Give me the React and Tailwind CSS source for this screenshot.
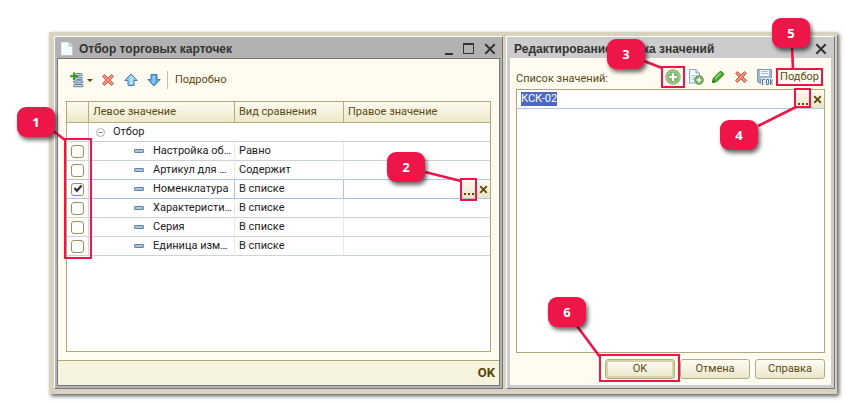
import React, { useState } from "react";

const ROWS = [
  { id: "setting", name: "Настройка об…", compare: "Равно" },
  { id: "article", name: "Артикул для …", compare: "Содержит" },
  { id: "nomenclature", name: "Номенклатура", compare: "В списке" },
  { id: "feature", name: "Характеристи…", compare: "В списке" },
  { id: "series", name: "Серия", compare: "В списке" },
  { id: "unit", name: "Единица изм…", compare: "В списке" },
];

// Numbered badge with a leader line and a frame around its parent.
// line is [x1, y1, x2, y2], counted from the top left corner of the frame
const Callout = ({ number, frame, badge, line }) => (
  <span className={`pointer-events-none absolute z-20 border-2 border-[#ee1549] ${frame}`}>
    <svg className="absolute -top-0.5 -left-0.5 overflow-visible" width="1" height="1" aria-hidden="true">
      <line x1={line[0]} y1={line[1]} x2={line[2]} y2={line[3]} stroke="#ee1549" strokeWidth="2.6" />
    </svg>
    <span
      className={`absolute flex h-[30px] w-[38px] items-center justify-center rounded-[9px] bg-[#ee1549] font-['Open_Sans',sans-serif] text-[13px] font-bold text-white shadow-[2px_3px_4px_rgba(0,0,0,0.6)] ${badge}`}
    >
      {number}
    </span>
  </span>
);

const CrossIcon = () => (
  <svg width="14" height="14" viewBox="0 0 14 14" aria-hidden="true">
    <path d="M1.500 3.500 3.500 1.500 7 5 10.500 1.500 12.500 3.500 9 7 12.500 10.500 10.500 12.500 7 9 3.500 12.500 1.500 10.500 5 7Z" fill="#f58a78" stroke="#d0604f" strokeWidth="1" strokeLinejoin="round" />
  </svg>
);

const PageIcon = () => (
  <svg width="12" height="14" viewBox="0 0 12 14" aria-hidden="true">
    <path d="M.5.5h7.5l3.5 3.5v9.500H.5z" fill="#f6fbff" stroke="#dfeaf3" />
    <path d="M8 .5V4h3.500" fill="#c6dced" stroke="#8fb1cb" strokeWidth=".8" />
    <path d="M.5 13.500h11V4" fill="none" stroke="#a3bfd4" strokeWidth=".8" />
  </svg>
);

const AddRowIcon = () => (
  <svg width="14" height="16" viewBox="0 0 14 16" aria-hidden="true">
    <g fill="#c3d6e4" stroke="#56768f" strokeWidth=".9">
      <rect x="5.500" y="1.500" width="7" height="2.200" rx="1" />
      <rect x="5.500" y="5.200" width="7" height="2.200" rx="1" />
      <rect x="3.500" y="8.800" width="9.500" height="2.200" rx="1" />
      <rect x="3.500" y="12.500" width="9.500" height="2.200" rx="1" />
    </g>
    <path d="M4 .5v7.500M0 4.200h8" stroke="#3a9a20" strokeWidth="2" />
  </svg>
);

const ArrowIcon = ({ down }) => (
  <svg width="14" height="14" viewBox="0 0 14 14" aria-hidden="true">
    <g transform={down ? "rotate(180 7 7)" : undefined}>
      <path d="M7 1 13.200 7.500H10v5H4v-5H.8Z" fill={down ? "#5fa9e0" : "#8fcbf2"} stroke="#477da8" strokeLinejoin="round" />
      <path d="M7 2.800 10 6H8.500v5.200H6V6Z" fill={down ? "#8fc8ef" : "#bfe3fa"} />
    </g>
  </svg>
);

const PlusCircleIcon = () => (
  <svg width="16" height="16" viewBox="0 0 16 16" aria-hidden="true">
    <circle cx="8" cy="8" r="7.200" fill="#7fba67" stroke="#7f9f78" />
    <circle cx="8" cy="8" r="6.200" fill="none" stroke="#b5dba5" />
    <path d="M8 4v8M4 8h8" stroke="#fff" strokeWidth="2.200" />
  </svg>
);

const AddPageIcon = () => (
  <svg width="16" height="16" viewBox="0 0 16 16" aria-hidden="true">
    <path d="M1.500.5H8L11.500 4v10h-10z" fill="#f4f9fc" stroke="#8ca9bd" />
    <path d="M8 .5V4h3.500" fill="#d2e2ed" stroke="#8ca9bd" />
    <path d="M3.500 6.500h6M3.500 8.500h4M3.500 10.500h3" stroke="#b5c9d6" />
    <circle cx="11" cy="11" r="4.300" fill="#74b060" stroke="#6a9660" />
    <path d="M11 8.500v5M8.500 11h5" stroke="#fff" strokeWidth="1.600" />
  </svg>
);

const PencilIcon = () => (
  <svg width="14" height="14" viewBox="0 0 14 14" aria-hidden="true">
    <path d="M1.500 12.500 2.300 8.200 8.800 1.800Q9.800 1 10.800 1.900L12.300 3.400Q13 4.200 12.300 5L5.800 11.600Z" fill="#45b026" stroke="#2e7f1b" strokeLinejoin="round" />
    <path d="M4.200 8.700 9.800 3.100" stroke="#a4e28a" strokeWidth="1.200" />
    <path d="m1.500 12.500.6-2.300 1.700 1.700Z" fill="#1f4f12" />
  </svg>
);

const SaveIcon = () => (
  <svg width="16" height="16" viewBox="0 0 16 16" aria-hidden="true">
    <path d="M.5.5h14v13.500H2L.5 12.500z" fill="#9db8cc" stroke="#7a99b0" />
    <rect x="3" y="1" width="9" height="6" fill="#f4f8fb" />
    <path d="M4 2.500h7M4 4.500h7" stroke="#a8bfcf" />
    <path d="M3 9h13v7H3z" fill="#e6edf2" />
    <path d="M3.500 9.500v5" stroke="#7a99b0" />
    <path d="M5.500 16v-5.500H8M9.500 10.500h2v5h-2zM13.500 10v6M16 10.500l-2 2.500 2 2.500" fill="none" stroke="#5a7990" />
  </svg>
);

const SmallCross = () => (
  <svg width="9" height="9" viewBox="0 0 9 9" aria-hidden="true">
    <path d="m1.200 1.200 6.600 6.600M7.800 1.200 1.200 7.800" stroke="#5e4a08" strokeWidth="1.900" />
  </svg>
);

const CloseIcon = () => (
  <svg width="12" height="12" viewBox="0 0 12 12" aria-hidden="true">
    <path d="m1.300 1.300 9.400 9.400M10.700 1.300l-9.400 9.400" stroke="#333" strokeWidth="2" />
  </svg>
);

const FieldButtons = ({ callout }) => (
  <span className="flex h-[18px] shrink-0 bg-linear-to-b from-[#fcfbf0] to-[#e9e5c8] text-[#5e4a08]">
    <span className="relative flex">
      <button type="button" aria-label="Выбрать" className="flex w-[15px] items-end justify-center">
        <svg width="10" height="5" viewBox="0 0 10 5" aria-hidden="true">
          <path d="M0 0h2v2H0zM4 0h2v2H4zM8 0h2v2H8z" fill="#5e4a08" />
        </svg>
      </button>
      {callout}
    </span>
    <button type="button" aria-label="Очистить" className="flex w-[14px] items-center justify-center">
      <SmallCross />
    </button>
  </span>
);

const FilterRow = ({ row, first, active, beforeActive, checked, onToggle, onSelect }) => {
  const line = active || beforeActive ? "border-b-[#a9c6ea]" : "border-b-[#ccd3d3]";
  return (
    <tr onClick={onSelect} className="h-[19px]">
      <td className={`relative border-r border-b border-r-[#d5d9d9] p-0 ${line}`}>
        <input
          type="checkbox"
          aria-label={row.name}
          checked={checked}
          onChange={onToggle}
          className="peer mx-auto block size-[13px] appearance-none rounded-[3px] border border-[#9c905c] bg-white"
        />
        <svg className="pointer-events-none absolute top-[4px] left-[6px] hidden peer-checked:block" width="10" height="9" viewBox="0 0 10 9" aria-hidden="true">
          <path d="M1.500 4 4 6.800 8.500 1.500" fill="none" stroke="#333" strokeWidth="2.200" />
        </svg>
        {first && (
          <Callout number="1" frame="-top-1 -left-[3px] h-[121px] w-7" badge="-top-[33px] -left-[49px]" line={[-12, -8, 1, 2]} />
        )}
      </td>
      <td className={`border-r border-b p-0 ${line} ${active ? "border-r-[#a9c6ea]" : "border-r-[#e9ebeb]"}`}>
        <div className="flex items-center pl-[45px]">
          <span className="h-1 w-[10px] shrink-0 rounded-[1px] border border-[#5d87a3] bg-[#a6c6d9]" />
          <span className="ml-[9px] whitespace-nowrap">{row.name}</span>
        </div>
      </td>
      <td className={`border-r border-b py-0 pl-1 ${line} ${active ? "border-r-[#a9c6ea]" : "border-r-[#e9ebeb]"}`}>{row.compare}</td>
      <td className={`border-b p-0 ${line}`}>
        {active && (
          <div className="flex justify-end">
            <FieldButtons
              callout={<Callout number="2" frame="-top-0.5 -left-px h-[23px] w-[17px]" badge="-top-7 -left-[75px]" line={[-35, -6, 1, 3]} />}
            />
          </div>
        )}
      </td>
    </tr>
  );
};

const FilterWindow = () => {
  const [checked, setChecked] = useState({ nomenclature: true });
  const [active, setActive] = useState("nomenclature");
  const activeIndex = ROWS.findIndex((r) => r.id === active);
  const headCell = "border-r border-b border-[#b5ad80] py-0 pl-1 text-left font-normal last:border-r-0";

  return (
    <section className="flex min-w-0 flex-[443] flex-col border border-t-white border-r-[#777] border-b-[#777] border-l-white bg-[#b2b2b2] px-0.5 pb-0.5">
      <header className="flex h-[21px] items-center pt-0.5 pr-1 pl-1">
        <PageIcon />
        <h1 className="ml-1.5 flex-1 font-['Liberation_Sans',Arial,sans-serif] text-[12px] font-bold text-[#333]">Отбор торговых карточек</h1>
        <div className="flex items-center gap-[10px]">
          <button type="button" aria-label="Свернуть" className="flex h-3 w-2 items-end">
            <span className="h-0.5 w-2 bg-[#333]" />
          </button>
          <button type="button" aria-label="Развернуть" className="size-[11px] border border-t-2 border-[#333]" />
          <button type="button" aria-label="Закрыть"><CloseIcon /></button>
        </div>
      </header>

      <div className="flex flex-1 flex-col border border-[#777] bg-[#fffbf0]">
        <div className="flex h-[42px] items-center pl-3 text-[#5a4b16]">
          <button type="button" aria-label="Добавить" className="flex items-center gap-[3px]">
            <AddRowIcon />
            <svg width="6" height="3" viewBox="0 0 6 3" aria-hidden="true"><path d="M0 0h6L3 3z" fill="#5e4a08" /></svg>
          </button>
          <button type="button" aria-label="Удалить" className="ml-2"><CrossIcon /></button>
          <button type="button" aria-label="Вверх" className="ml-[9px]"><ArrowIcon /></button>
          <button type="button" aria-label="Вниз" className="ml-[9px]"><ArrowIcon down /></button>
          <span className="ml-1.5 h-[18px] w-px bg-[#c9c19a]" />
          <button type="button" className="ml-[7px]">Подробно</button>
        </div>

        <div className="mx-2 flex-1 border border-[#b0a878] bg-white">
          <table className="w-full table-fixed border-separate border-spacing-0 leading-[18px] text-[#222]">
            <colgroup>
              <col className="w-[22px]" />
              <col className="w-[146px]" />
              <col className="w-[109px]" />
              <col />
            </colgroup>
            <thead>
              <tr className="h-[21px] bg-linear-to-b from-[#fcfaf0] to-[#ece7c8] text-[#5a4b16]">
                <th className={headCell} aria-label="Использование" />
                <th className={headCell}>Левое значение</th>
                <th className={headCell}>Вид сравнения</th>
                <th className={headCell}>Правое значение</th>
              </tr>
            </thead>
            <tbody>
              <tr className="h-[19px]">
                <td className="border-r border-b border-[#ccd3d3] p-0" />
                <td colSpan={3} className="border-b border-[#ccd3d3] p-0">
                  <div className="flex items-center pl-[7px]">
                    <svg width="9" height="9" viewBox="0 0 9 9" aria-hidden="true">
                      <circle cx="4.500" cy="4.500" r="4" fill="#fff" stroke="#aaa" />
                      <path d="M2.500 4.500h4" stroke="#777" />
                    </svg>
                    <span className="ml-2">Отбор</span>
                  </div>
                </td>
              </tr>
              {ROWS.map((row, i) => (
                <FilterRow
                  key={row.id}
                  row={row}
                  first={i === 0}
                  active={row.id === active}
                  beforeActive={i === activeIndex - 1}
                  checked={!!checked[row.id]}
                  onToggle={() => setChecked({ ...checked, [row.id]: !checked[row.id] })}
                  onSelect={() => setActive(row.id)}
                />
              ))}
            </tbody>
          </table>
        </div>

        <footer className="mt-2 flex h-[25px] items-center justify-end border-t border-[#b0a878] bg-[#f5f2dd] pr-1">
          <button type="button" className="text-[13px] font-bold text-[#5a4205]">OK</button>
        </footer>
      </div>
    </section>
  );
};

const ValueListWindow = () => {
  const [value, setValue] = useState("КСК-02");
  const dialogButton = "h-5 w-full rounded-[3px] border border-[#b5ad80] bg-linear-to-b from-[#fdfcf3] to-[#ebe7cb]";

  return (
    <section className="flex min-w-0 flex-[321] flex-col border border-t-white border-r-[#777] border-b-[#777] border-l-white bg-[#ccc] px-[3px] pb-[3px]">
      <header className="flex h-[21px] items-center pt-0.5 pr-1 pl-1">
        <h2 className="flex-1 font-['Liberation_Sans',Arial,sans-serif] text-[12px] font-bold whitespace-nowrap text-[#333]">Редактирование списка значений</h2>
        <button type="button" aria-label="Закрыть"><CloseIcon /></button>
      </header>

      <div className="flex flex-1 flex-col bg-[#fffbf0] px-1.5 pb-1.5 text-[#5a4b16]">
        <div className="flex h-[31px] items-center pt-1.5">
          <label htmlFor="value" className="flex-1 pt-1">Список значений:</label>
          <div className="flex items-center gap-[7px] pr-0.5">
            <span className="relative flex">
              <button type="button" aria-label="Добавить"><PlusCircleIcon /></button>
              <Callout number="3" frame="-top-[3px] -left-1 h-[22px] w-6" badge="-top-[29px] -left-14" line={[-17, -5, 1, 2]} />
            </span>
            <button type="button" aria-label="Добавить новый"><AddPageIcon /></button>
            <button type="button" aria-label="Изменить"><PencilIcon /></button>
            <button type="button" aria-label="Удалить" className="ml-0.5"><CrossIcon /></button>
            <button type="button" aria-label="Сохранить" className="ml-0.5"><SaveIcon /></button>
            <span className="relative -ml-1 flex w-[47px] justify-center">
              <button type="button">Подбор</button>
              <Callout number="5" frame="inset-x-0 -top-px h-[18px]" badge="-top-[52px] -left-1.5" line={[16, -21, 17, 1]} />
            </span>
          </div>
        </div>

        <div className="flex-1 border border-[#b0a878] bg-white">
          <div className="flex h-[19px] border-b border-[#a9c6ea]">
            <span className="flex min-w-0 flex-1 items-center pl-1">
              <input
                id="value"
                type="text"
                value={value}
                onChange={(e) => setValue(e.target.value)}
                className="field-sizing-content h-[14px] bg-[#4d68c4] text-white outline-none"
              />
            </span>
            <FieldButtons
              callout={<Callout number="4" frame="-top-0.5 -left-px h-5 w-[17px]" badge="top-[30px] -left-[76px]" line={[-36, 38, 2, 19]} />}
            />
          </div>
        </div>

        <div className="mt-1.5 flex justify-end gap-[5px]">
          <div className="relative w-[70px]">
            <button type="button" className={`${dialogButton} shadow-[inset_0_0_0_2px_#d9d2a8]`}>OK</button>
            <Callout number="6" frame="-top-[5px] -left-1.5 h-7 w-[81px]" badge="-top-[59px] -left-[53px]" line={[-22, -28, 1, 3]} />
          </div>
          <div className="w-[70px]"><button type="button" className={dialogButton}>Отмена</button></div>
          <div className="w-[70px]"><button type="button" className={dialogButton}>Справка</button></div>
        </div>
      </div>
    </section>
  );
};

const App = () => (
  <main className="flex min-h-screen bg-white pt-8 pr-[9px] pb-[9px] pl-[49px] font-['Roboto',sans-serif] text-[11px] leading-4">
    <div className="flex min-w-0 flex-1 gap-[3px] bg-[#d8d3bf] pt-1 pr-0.5 pb-[5px] pl-[5px] shadow-[2px_2px_4px_rgba(0,0,0,0.65)]">
      <FilterWindow />
      <ValueListWindow />
    </div>
  </main>
);

export default App;
